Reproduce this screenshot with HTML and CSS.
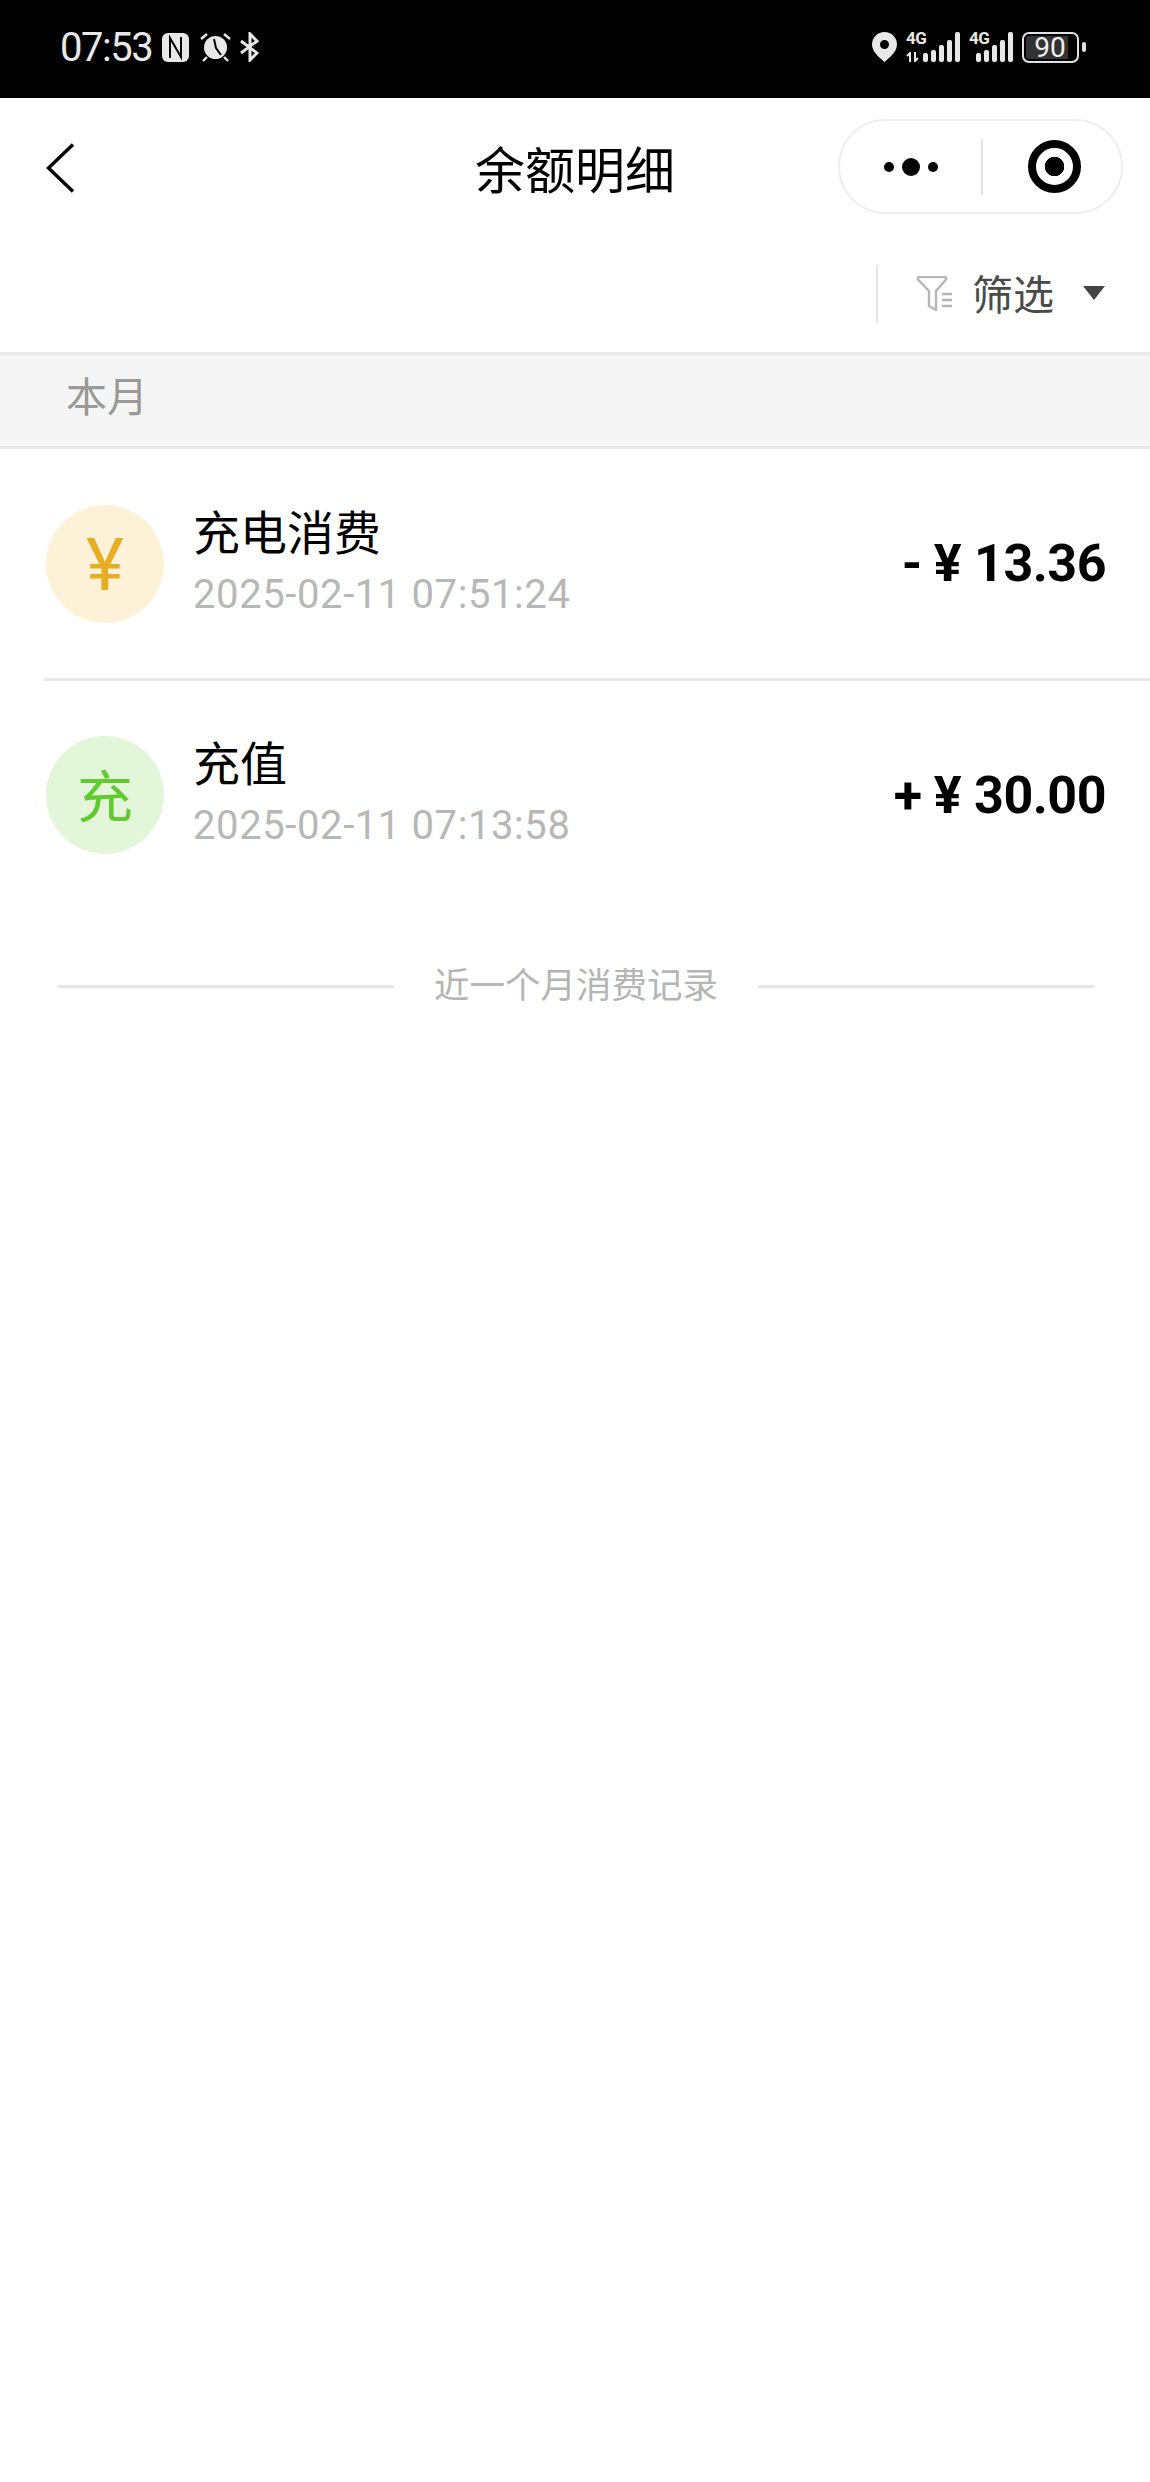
FILE: index.html
```html
<!DOCTYPE html>
<html lang="zh-CN">
<head>
    <meta charset="UTF-8">
    <meta name="viewport" content="width=device-width, initial-scale=1.0">
    <title>余额明细</title>
    <link rel="stylesheet" href="styles.css">
</head>
<body>
    <!-- Phone status bar -->
    <div class="status-bar">
        <div class="status-left">
            <span class="status-time">07:53</span>
            <svg class="status-nfc" width="27" height="29" viewBox="0 0 27 29">
                <rect x="0" y="0" width="27" height="29" rx="6" fill="#e8e8e8"/>
                <path d="M8 25V5l11 19V4" fill="none" stroke="#000" stroke-width="2"/>
            </svg>
            <svg class="status-alarm" width="31" height="30" viewBox="0 0 31 30">
                <circle cx="15.500" cy="15.500" r="11.500" fill="#e8e8e8"/>
                <path d="M14 7l2 9 5 7" fill="none" stroke="#000" stroke-width="2"/>
                <path d="M1 7l6-5M30 7l-6-5M7 25l-4 4M24 25l4 4" stroke="#e8e8e8" stroke-width="2.400" fill="none"/>
            </svg>
            <svg class="status-bt" width="19" height="30" viewBox="0 0 19 30">
                <path d="M1 9l16 12-7 7V2l7 7L1 21" fill="none" stroke="#e8e8e8" stroke-width="3"/>
            </svg>
        </div>
        <div class="status-right">
            <svg width="25" height="30" viewBox="0 0 25 30">
                <path fill-rule="evenodd" fill="#e8e8e8" d="M12.500 0C5.500 0 0 5.500 0 12.500C0 20 8.500 26.500 12.500 30C16.500 26.500 25 20 25 12.500C25 5.500 19.500 0 12.500 0ZM12.500 8a4.500 4.500 0 1 1 0 9a4.500 4.500 0 0 1 0-9Z"/>
            </svg>
            <div class="signal sim-one">
                <span class="net-label">4G</span>
                <svg class="net-arrows" width="13" height="10" viewBox="0 0 13 10">
                    <path d="M4 10V1L1 4M9 0v9l3-3" fill="none" stroke="#e8e8e8" stroke-width="2"/>
                </svg>
                <div class="bars">
                    <i class="b1"></i><i class="b2"></i><i class="b3"></i><i class="b4"></i><i class="b5"></i>
                </div>
            </div>
            <div class="signal sim-two">
                <span class="net-label">4G</span>
                <div class="bars">
                    <i class="b1"></i><i class="b2"></i><i class="b3"></i><i class="b4"></i><i class="b5"></i>
                </div>
            </div>
            <div class="battery">
                <div class="battery-body"><span>90</span></div>
                <div class="battery-tip"></div>
            </div>
        </div>
    </div>

    <!-- Mini program nav -->
    <div class="nav-bar">
        <svg class="back-icon" width="30" height="52" viewBox="0 0 30 52">
            <path d="M28 2.500L3.500 26L28 49.500" fill="none" stroke="#000" stroke-width="3.400"/>
        </svg>
        <h1 class="nav-title">余额明细</h1>
        <div class="capsule">
            <div class="capsule-more">
                <i class="dot"></i><i class="dot big"></i><i class="dot"></i>
            </div>
            <div class="capsule-line"></div>
            <div class="capsule-close"><i></i></div>
        </div>
    </div>

    <!-- Filter -->
    <div class="filter-bar">
        <div class="filter-btn">
            <svg width="37" height="36" viewBox="0 0 37 36">
                <path d="M2 3.500Q1 1 4 1H28Q31 1 30 3.500L20 15V34L13 30V15Z" fill="none" stroke="#b5b5b5" stroke-width="2.400" stroke-linejoin="round"/>
                <path d="M26 18h10M26 24h10M26 30h10" stroke="#b5b5b5" stroke-width="2.400"/>
            </svg>
            <span class="filter-text">筛选</span>
            <i class="filter-arrow"></i>
        </div>
    </div>

    <div class="month-head">本月</div>

    <div class="record-list">
        <div class="record">
            <div class="record-icon spend">¥</div>
            <div class="record-info">
                <div class="record-name">充电消费</div>
                <div class="record-time">2025-02-11 07:51:24</div>
            </div>
            <div class="record-amount"><span class="sign">-</span><span class="yen">¥</span>13.36</div>
        </div>
        <div class="record">
            <div class="record-icon charge">充</div>
            <div class="record-info">
                <div class="record-name">充值</div>
                <div class="record-time">2025-02-11 07:13:58</div>
            </div>
            <div class="record-amount"><span class="sign">+</span><span class="yen">¥</span>30.00</div>
        </div>
    </div>

    <div class="list-end">
        <div class="end-line"></div>
        <span>近一个月消费记录</span>
        <div class="end-line"></div>
    </div>
</body>
</html>
```

FILE: styles.css
```css
body {
    margin: 0;
    padding: 0;
    background: #fff;
    font-family: "Roboto", "Noto Sans CJK SC", sans-serif;
    color: #000;
    min-height: 2482px;
}

/* Status bar */
.status-bar {
    height: 98px;
    background: #000;
    display: flex;
    align-items: center;
    justify-content: space-between;
    padding: 0 64px 4px 60px;
    box-sizing: border-box;
    color: #e8e8e8;
}

.status-left {
    display: flex;
    align-items: center;
}

.status-time {
    font-size: 40px;
    letter-spacing: -1.500px;
    margin-right: 10px;
}

.status-alarm {
    margin: 0 9px 0 11px;
}

.status-right {
    display: flex;
    align-items: center;
}

.signal {
    position: relative;
    height: 30px;
    display: flex;
    align-items: flex-end;
    justify-content: flex-end;
    margin-left: 9px;
}

.sim-one {
    width: 54px;
}

.sim-two {
    width: 44px;
}

.net-label {
    position: absolute;
    left: 0;
    top: 0;
    font-size: 17px;
    font-weight: 700;
    line-height: 13px;
    letter-spacing: -0.500px;
}

.net-arrows {
    position: absolute;
    left: 0;
    bottom: 0;
}

.bars {
    display: flex;
    align-items: flex-end;
    gap: 3px;
}

.bars i {
    display: block;
    width: 5px;
    background: #e8e8e8;
    border-radius: 2px;
}

.bars .b1 { height: 9px; }
.bars .b2 { height: 12px; }
.bars .b3 { height: 17px; }
.bars .b4 { height: 22px; }
.bars .b5 { height: 30px; }

.battery {
    display: flex;
    align-items: center;
    margin-left: 9px;
}

.battery-body {
    width: 57px;
    height: 31px;
    box-sizing: border-box;
    border: 2px solid #e0e0e0;
    border-radius: 7px;
    padding: 2px;
    display: flex;
}

.battery-body span {
    flex: 1;
    background: #333;
    border-radius: 3px 0 0 3px;
    font-size: 28px;
    line-height: 23px;
    text-align: center;
    color: #eee;
    margin-right: 7px;
    padding-left: 6px;
}

.battery-tip {
    width: 4px;
    height: 10px;
    margin-left: 3px;
    background: #e0e0e0;
    border-radius: 2px;
}

/* Nav */
.nav-bar {
    height: 140px;
    display: grid;
    grid-template-columns: 1fr auto 1fr;
    align-items: center;
    padding: 0 27px;
    box-sizing: border-box;
}

.back-icon {
    margin: 0 0 0 18px;
}

.nav-title {
    margin: 0 0 2px 0;
    text-align: center;
    font-size: 50px;
    font-weight: 400;
}

.capsule {
    justify-self: end;
    width: 285px;
    height: 95px;
    box-sizing: border-box;
    border: 2px solid #eee;
    border-radius: 48px;
    display: flex;
    align-items: center;
    margin-bottom: 3px;
}

.capsule-more {
    width: 141px;
    display: flex;
    align-items: center;
    justify-content: center;
    gap: 8px;
}

.dot {
    display: block;
    width: 10px;
    height: 10px;
    border-radius: 50%;
    background: #000;
}

.dot.big {
    width: 18px;
    height: 18px;
}

.capsule-line {
    width: 2px;
    height: 56px;
    background: #e3e3e3;
}

.capsule-close {
    flex: 1;
    display: flex;
    justify-content: center;
    padding-left: 4px;
}

.capsule-close i {
    display: block;
    width: 53px;
    height: 53px;
    box-sizing: border-box;
    border: 8px solid #000;
    border-radius: 50%;
    background: radial-gradient(circle, #000 0, #000 9.500px, #fff 10px);
}

/* Filter */
.filter-bar {
    height: 114px;
    display: flex;
    justify-content: flex-end;
    padding-top: 27px;
    box-sizing: border-box;
}

.filter-btn {
    width: 274px;
    height: 58px;
    box-sizing: border-box;
    border-left: 2px solid #e6e6e6;
    display: flex;
    align-items: center;
    padding-left: 38px;
}

.filter-text {
    font-size: 41px;
    color: #4a4a4a;
    margin: 0 0 5px 19px;
}

.filter-arrow {
    width: 0;
    height: 0;
    border-left: 11px solid transparent;
    border-right: 11px solid transparent;
    border-top: 14px solid #444;
    margin: 0 0 3px 29px;
}

.month-head {
    height: 97px;
    box-sizing: border-box;
    background: #f5f5f5;
    border-top: 3px solid #e8e8e8;
    border-bottom: 3px solid #e8e8e8;
    padding-left: 66px;
    font-size: 41px;
    line-height: 87px;
    color: #999;
}

/* Records */
.record {
    height: 232px;
    margin-left: 44px;
    padding-right: 44px;
    box-sizing: border-box;
    display: flex;
    align-items: center;
    border-bottom: 3px solid #e8e8e8;
}

.record:last-child {
    height: 228px;
    border-bottom: none;
}

.record-icon {
    width: 118px;
    height: 118px;
    margin-left: 2px;
    border-radius: 50%;
    display: flex;
    align-items: center;
    justify-content: center;
}

.record-icon.spend {
    background: #fdf2d8;
    color: #e8ae22;
    font-size: 72px;
    padding-top: 3px;
    height: 115px;
}

.record-icon.charge {
    background: #e3f6da;
    color: #5fcb2c;
    font-size: 56px;
    padding-bottom: 5px;
    height: 113px;
}

.record-info {
    flex: 1;
    margin-left: 29px;
}

.record-name {
    font-size: 47px;
    line-height: 62px;
}

.record-time {
    font-size: 40px;
    line-height: 60px;
    letter-spacing: 0.600px;
    color: #b7b7b7;
}

.record-amount {
    font-size: 52px;
    font-weight: 700;
    letter-spacing: -0.500px;
    display: flex;
    align-items: center;
}

.sign {
    margin-right: 12px;
}

.yen {
    margin-right: 13px;
}

.list-end {
    display: flex;
    align-items: center;
    justify-content: space-between;
    padding: 0 56px 0 58px;
    margin-top: 52px;
    color: #b5b5b5;
    font-size: 35.500px;
    line-height: 50px;
}

.end-line {
    width: 336px;
    height: 3px;
    background: #e6e6e6;
}
```
